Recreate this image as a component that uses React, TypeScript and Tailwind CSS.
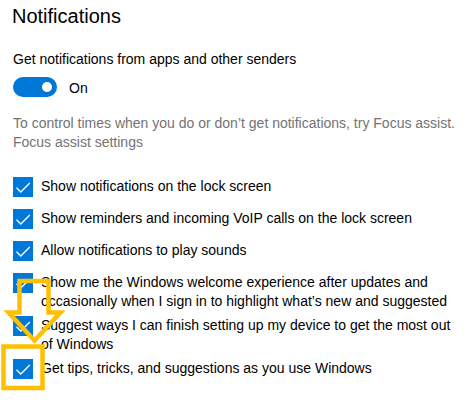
import React from "react";

const options: string[][] = [
  ["Show notifications on the lock screen"],
  ["Show reminders and incoming VoIP calls on the lock screen"],
  ["Allow notifications to play sounds"],
  [
    "Show me the Windows welcome experience after updates and",
    "occasionally when I sign in to highlight what\u2019s new and suggested",
  ],
  [
    "Suggest ways I can finish setting up my device to get the most out",
    "of Windows",
  ],
  ["Get tips, tricks, and suggestions as you use Windows"],
];

function CheckBox() {
  return (
    <span className="mt-[5px] flex h-5 w-5 shrink-0 items-center justify-center bg-[#0078d7]">
      <svg width="20" height="20" viewBox="0 0 20 20" fill="none">
        <polyline
          points="3.5,10.8 7.8,15 16.8,6"
          stroke="#ffffff"
          strokeWidth="1.3"
        />
      </svg>
    </span>
  );
}

function Toggle() {
  return (
    <span className="flex h-5 w-11 shrink-0 items-center justify-end rounded-full bg-[#0078d7] pr-[5px]">
      <span className="h-[10px] w-[10px] rounded-full bg-white" />
    </span>
  );
}

function Overlay() {
  return (
    <svg
      className="pointer-events-none absolute left-0 top-0"
      width="472"
      height="416"
      viewBox="0 0 472 416"
      fill="none"
    >
      <polygon
        points="19.5,281 48.5,281 48.5,312.5 60.5,312.5 34.5,340.5 8.5,312.5 19.5,312.5"
        stroke="#ffc000"
        strokeWidth="4.5"
      />
      <rect x="3.5" y="346.5" width="39" height="41.5" stroke="#ffc000" strokeWidth="4.5" />
    </svg>
  );
}

export default function App() {
  return (
    <div className="relative h-[416px] w-[472px] overflow-hidden bg-white font-['Liberation_Sans',Arial,sans-serif] text-black">
      <div className="px-[13px] pt-[4px]">
        <h1 className="ml-[-1px] text-[20px] font-normal leading-[24px]">Notifications</h1>

        <p className="mt-[22px] text-[14px] leading-[18px]">
          Get notifications from apps and other senders
        </p>

        <div className="mt-[9px] flex h-5 items-start gap-3">
          <Toggle />
          <span className="pt-[2px] text-[14px] leading-[18px]">On</span>
        </div>

        <div className="mt-[17px] text-[14px] leading-[19px] text-[#737373]">
          <p className="whitespace-nowrap">
            To control times when you do or don{"\u2019"}t get notifications, try Focus assist.
          </p>
          <p>Focus assist settings</p>
        </div>

        <ul className="mt-[20px]">
          {options.map((lines, i) => (
            <li key={i} className="flex min-h-[32px] items-start gap-2">
              <CheckBox />
              <span className="pt-[5px] text-[14px] leading-[19px]">
                {lines.map((line) => (
                  <span key={line} className="block whitespace-nowrap">
                    {line}
                  </span>
                ))}
              </span>
            </li>
          ))}
        </ul>
      </div>
      <Overlay />
    </div>
  );
}
